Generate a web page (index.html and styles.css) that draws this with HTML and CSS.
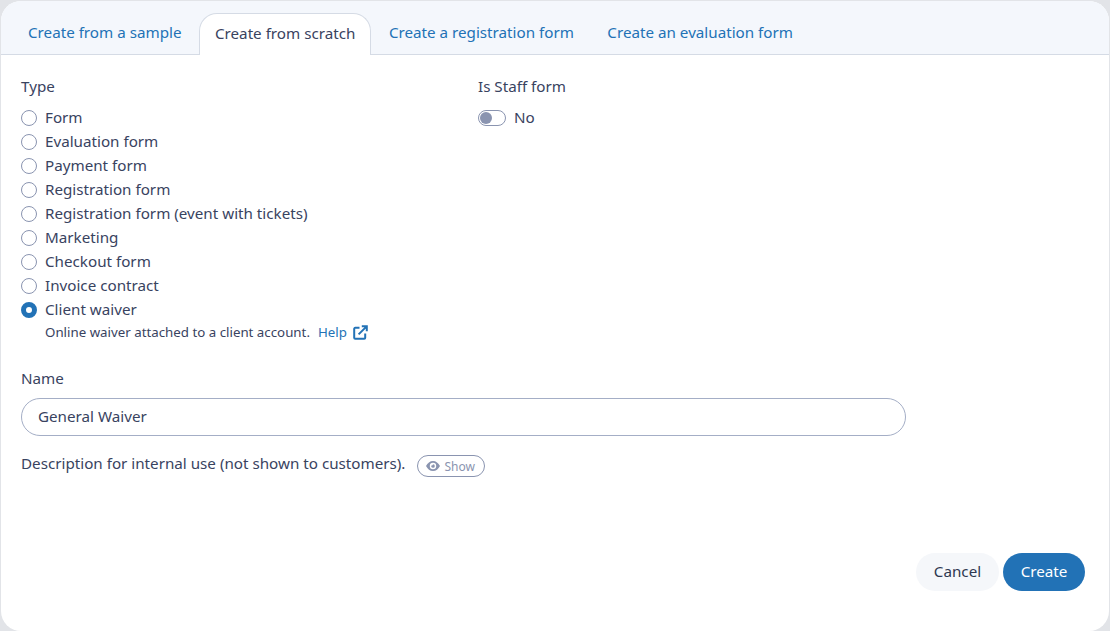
FILE: index.html
```html
<!DOCTYPE html>
<html lang="en">
<head>
    <meta charset="UTF-8">
    <title>Create form</title>
    <link rel="stylesheet" href="styles.css">
</head>
<body>
    <div class="modal">
        <div class="tabs">
            <a class="tab">Create from a sample</a>
            <a class="tab active">Create from scratch</a>
            <a class="tab">Create a registration form</a>
            <a class="tab">Create an evaluation form</a>
        </div>

        <div class="content">
            <div class="columns">
                <div class="type-col">
                    <div class="label">Type</div>
                    <div class="radio-list">
                        <div class="radio-row"><span class="radio"></span>Form</div>
                        <div class="radio-row"><span class="radio"></span>Evaluation form</div>
                        <div class="radio-row"><span class="radio"></span>Payment form</div>
                        <div class="radio-row"><span class="radio"></span>Registration form</div>
                        <div class="radio-row"><span class="radio"></span>Registration form (event with tickets)</div>
                        <div class="radio-row"><span class="radio"></span>Marketing</div>
                        <div class="radio-row"><span class="radio"></span>Checkout form</div>
                        <div class="radio-row"><span class="radio"></span>Invoice contract</div>
                        <div class="radio-row"><span class="radio checked"></span>Client waiver</div>
                    </div>
                    <div class="hint">
                        Online waiver attached to a client account.
                        <a class="help">Help
                            <svg width="15" height="15" viewBox="0 0 15 15" fill="none" stroke="#2272b6" stroke-width="2">
                                <path d="M6.500 2.800H2.200a1 1 0 0 0-1 1v9a1 1 0 0 0 1 1h9a1 1 0 0 0 1-1V8.500"/>
                                <path d="M5.600 9.400 13.400 1.600M8.800 1.200h5v5" />
                            </svg>
                        </a>
                    </div>
                </div>
                <div class="staff-col">
                    <div class="label">Is Staff form</div>
                    <div class="toggle-row">
                        <span class="toggle"><span class="knob"></span></span>No
                    </div>
                </div>
            </div>

            <div class="label name-label">Name</div>
            <input class="name-input" type="text" value="General Waiver">

            <div class="desc-row">
                <span class="desc">Description for internal use (not shown to customers).</span>
                <button class="show-btn">
                    <svg width="14" height="10" viewBox="0 0 14 10">
                        <path fill="#8a94b0" fill-rule="evenodd" d="M7 0c3 0 5.400 2 7 5-1.600 3-4 5-7 5S1.600 8 0 5c1.600-3 4-5 7-5Zm0 1.800a3.200 3.200 0 1 0 0 6.400 3.200 3.200 0 0 0 0-6.400Zm0 1.400a1.800 1.800 0 1 1-1.700 1.200c.5.300 1.500-.3 1.700-1.200Z"/>
                    </svg>
                    Show
                </button>
            </div>
        </div>

        <div class="actions">
            <button class="btn cancel">Cancel</button>
            <button class="btn create">Create</button>
        </div>
    </div>
</body>
</html>
```

FILE: styles.css
```css
html, body {
    height: 100%;
}

body {
    margin: 0;
    background-color: #e2e4e8;
    font-family: "Noto Sans", Arial, sans-serif;
    font-size: 15.2px;
    color: #39435f;
}

.modal {
    box-sizing: border-box;
    height: 630px;
    margin: 1px 1px 0 1px;
    background-color: white;
    border-radius: 20px;
    display: flex;
    flex-direction: column;
    overflow: hidden;
}

.tabs {
    display: flex;
    align-items: flex-end;
    gap: 1.5px;
    height: 54px;
    padding-left: 11px;
    box-sizing: border-box;
    background-color: #f4f7fc;
    border-bottom: 1px solid #d5dbe5;
}

.tab {
    padding: 0 16px;
    height: 41px;
    line-height: 39px;
    color: #2272b6;
    white-space: nowrap;
}

.tab.active {
    height: 42px;
    margin-bottom: -1px;
    line-height: 39px;
    background-color: white;
    color: #39435f;
    border: 1px solid #d5dbe5;
    border-bottom: none;
    border-radius: 18px 18px 0 0;
    box-sizing: border-box;
    padding: 0 15px;
}

.content {
    flex: 1;
    padding: 20px 20px 0;
}

.columns {
    display: flex;
}

.type-col {
    width: 457px;
}

.label {
    line-height: 22px;
}

.radio-list {
    margin-top: 8px;
}

.radio-row {
    display: flex;
    align-items: center;
    height: 24px;
}

.radio {
    box-sizing: border-box;
    width: 16px;
    height: 16px;
    margin-top: 2px;
    margin-right: 8px;
    border: 1px solid #8a94b0;
    border-radius: 50%;
    background-color: white;
}

.radio.checked {
    border: 5px solid #2272b6;
}

.hint {
    display: flex;
    align-items: center;
    gap: 8px;
    margin-top: 1px;
    margin-left: 24px;
    font-size: 13.3px;
    line-height: 20px;
}

.help {
    display: flex;
    align-items: center;
    gap: 6px;
    color: #2272b6;
}

.toggle-row {
    display: flex;
    align-items: center;
    height: 24px;
    margin-top: 8px;
}

.toggle {
    box-sizing: border-box;
    display: flex;
    align-items: center;
    width: 28px;
    height: 16px;
    margin-top: 2px;
    margin-right: 8px;
    padding-left: 1px;
    border: 1px solid #8a94b0;
    border-radius: 8px;
}

.knob {
    width: 12px;
    height: 12px;
    border-radius: 50%;
    background-color: #8a94b0;
}

.name-label {
    margin-top: 25px;
}

.name-input {
    display: block;
    box-sizing: border-box;
    width: 885px;
    height: 38px;
    margin-top: 9px;
    padding: 0 16px 2px;
    border: 1px solid #a4aec6;
    border-radius: 19px;
    font-family: inherit;
    font-size: 15.2px;
    color: #39435f;
}

.desc-row {
    display: flex;
    align-items: flex-start;
    gap: 12px;
    margin-top: 16px;
}

.desc {
    line-height: 22px;
}

.show-btn {
    display: flex;
    align-items: center;
    gap: 4px;
    height: 22px;
    margin-top: 3px;
    padding: 0 9px 0 8px;
    border: 1px solid #8a94b0;
    border-radius: 11px;
    background-color: white;
    font-family: inherit;
    font-size: 12px;
    color: #8a94b0;
}

.actions {
    display: flex;
    justify-content: flex-end;
    gap: 4px;
    padding: 0 24px 40px 0;
}

.btn {
    width: 83px;
    height: 38px;
    padding-bottom: 4px;
    border: none;
    border-radius: 19px;
    font-family: inherit;
    font-size: 15.2px;
}

.cancel {
    background-color: #f5f7fa;
    color: #2f3850;
}

.create {
    width: 82px;
    background-color: #2272b6;
    color: white;
}
```
